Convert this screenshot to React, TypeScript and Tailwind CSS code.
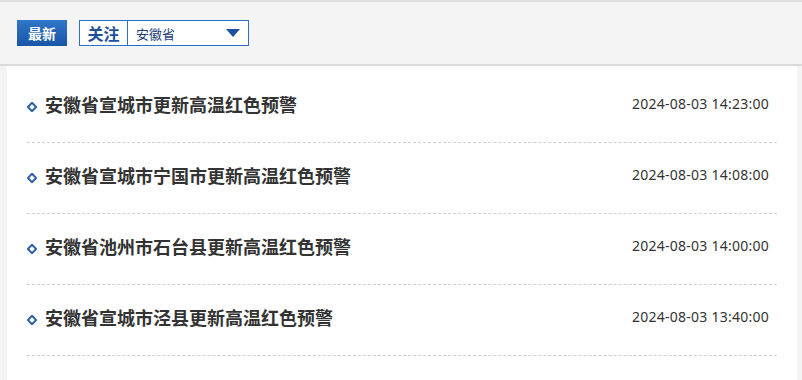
import React from "react";

const items = [
  { title: "安徽省宣城市更新高温红色预警", time: "2024-08-03 14:23:00" },
  { title: "安徽省宣城市宁国市更新高温红色预警", time: "2024-08-03 14:08:00" },
  { title: "安徽省池州市石台县更新高温红色预警", time: "2024-08-03 14:00:00" },
  { title: "安徽省宣城市泾县更新高温红色预警", time: "2024-08-03 13:40:00" },
];

const cjk = { fontFamily: '"Noto Sans CJK SC", "Noto Sans", sans-serif' };

export default function App() {
  return (
    <div className="w-[802px] h-[380px] overflow-hidden bg-[#f4f4f4] flex flex-col" style={cjk}>
      <div className="h-[2px] bg-[#dedede]" />
      <div className="h-[64px] flex items-start pt-[18px] pl-[17px] gap-[12px] border-b-2 border-[#dadada]">
        <div className="w-[50px] h-[26px] flex items-center justify-center bg-gradient-to-b from-[#2f76c8] to-[#1a55a6] text-white text-[14px] font-bold leading-none">
          最新
        </div>
        <div className="w-[170px] h-[26px] border border-[#2a72c6] bg-white flex items-stretch">
          <div className="w-[48px] flex items-center justify-center text-[16px] font-bold text-[#1f4f9c] border-r border-[#2a72c6] leading-none">
            关注
          </div>
          <div className="flex-1 flex items-center justify-between pl-[8px] pr-[8px]">
            <span className="text-[13px] text-[#1d3f7c] leading-none">安徽省</span>
            <svg width="14" height="8" viewBox="0 0 14 8">
              <polygon points="0,0 14,0 7,8" fill="#1c4f9c" />
            </svg>
          </div>
        </div>
      </div>
      <div className="flex-1 ml-[7px] mr-[5px] bg-white pt-[6px] pl-[20px] pr-[20px]">
        {items.map((it) => (
          <div key={it.title} className="flex items-center justify-between pt-[20px] pb-[26px] border-b border-dashed border-[#d0d0d0]">
            <div className="flex items-center h-[24px]">
              <svg width="10" height="10" viewBox="0 0 10 10" className="mt-[5px]">
                <polygon points="5,0.8 9.2,5 5,9.2 0.8,5" fill="none" stroke="#2a5db0" strokeWidth="2" />
              </svg>
              <span className="ml-[8px] text-[18px] font-bold text-[#333] leading-[24px]">{it.title}</span>
            </div>
            <span className="text-[14px] tracking-[0.25px] text-[#333] leading-[24px] mr-[8px]" style={{ fontFamily: '"Noto Sans", sans-serif' }}>
              {it.time}
            </span>
          </div>
        ))}
      </div>
    </div>
  );
}
